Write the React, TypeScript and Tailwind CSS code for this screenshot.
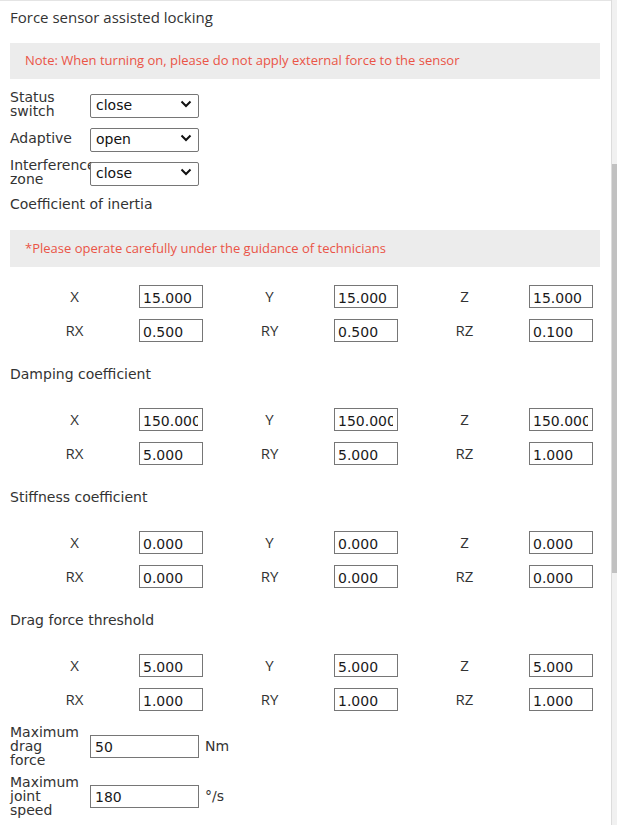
import React from "react";

const labelFont = { fontFamily: '"DejaVu Sans", Verdana, sans-serif' };

function Chevron() {
  return (
    <svg width="12" height="8" viewBox="0 0 12 8" className="absolute right-[7px] top-1/2 -translate-y-1/2 pointer-events-none">
      <path d="M1.5 1.5 L6 6 L10.5 1.5" fill="none" stroke="#111" strokeWidth="2" />
    </svg>
  );
}

function SelectRow({ label, value }: { label: string; value: string }) {
  return (
    <div className="flex items-center h-[34px]">
      <div className="w-[70px] mr-[10px] text-[14px] leading-[14px] text-[#333]" style={labelFont}>
        {label}
      </div>
      <div className="relative w-[109px] h-[24px]">
        <select
          defaultValue={value}
          className="appearance-none w-full h-full bg-white border border-[#767676] rounded-[2px] pl-[5px] text-[14px] text-[#111] outline-none"
          style={labelFont}
        >
          <option value="close">close</option>
          <option value="open">open</option>
        </select>
        <Chevron />
      </div>
    </div>
  );
}

function NumInput({ value }: { value: string }) {
  return (
    <input
      defaultValue={value}
      className="w-[64px] h-[23px] border border-[#767676] pl-[3px] pr-[4px] pt-[2px] text-[14px] text-[#1a1a1a] bg-white outline-none"
      style={labelFont}
    />
  );
}

function Group({ label, value }: { label: string; value: string }) {
  return (
    <div className="flex items-center w-[193px]">
      <div className="w-[129px] text-center text-[15px] text-[#333] leading-[20px] -translate-y-[1px]" style={{ fontFamily: '"Open Sans", sans-serif' }}>
        {label}
      </div>
      <NumInput value={value} />
    </div>
  );
}

function AxisGrid({ vals }: { vals: string[] }) {
  return (
    <div className="flex flex-col gap-[11px]">
      <div className="flex gap-[2px]">
        <Group label="X" value={vals[0]} />
        <Group label="Y" value={vals[1]} />
        <Group label="Z" value={vals[2]} />
      </div>
      <div className="flex gap-[2px]">
        <Group label="RX" value={vals[3]} />
        <Group label="RY" value={vals[4]} />
        <Group label="RZ" value={vals[5]} />
      </div>
    </div>
  );
}

function SectionLabel({ text, className = "" }: { text: string; className?: string }) {
  return (
    <div className={"text-[14px] leading-[20px] text-[#333] " + className} style={labelFont}>
      {text}
    </div>
  );
}

function Warn({ text, className = "" }: { text: string; className?: string }) {
  return (
    <div
      className={"flex items-center pl-[15px] bg-[#ececec] text-[13px] text-[#ea5447] " + className}
      style={{ fontFamily: '"Open Sans", sans-serif' }}
    >
      {text}
    </div>
  );
}

function UnitRow({ label, value, unit }: { label: string; value: string; unit: string }) {
  return (
    <div className="flex items-center">
      <div className="w-[70px] mr-[10px] text-[14px] leading-[14px] text-[#333]" style={labelFont}>
        {label}
      </div>
      <input
        defaultValue={value}
        className="w-[109px] h-[23px] border border-[#767676] pl-[4px] pt-[1px] text-[14px] text-[#1a1a1a] bg-white outline-none"
        style={labelFont}
      />
      <span className="ml-[6px] text-[14px] text-[#333]" style={labelFont}>
        {unit}
      </span>
    </div>
  );
}

export default function App() {
  return (
    <div className="w-[617px] h-[825px] flex overflow-hidden bg-white">
      <div className="w-[611px] border-t border-[#e4e4e4] pl-[10px] pr-[11px] pt-[6px]">
        <div className="text-[15px] leading-[20px] text-[#333]" style={{ fontFamily: '"Open Sans", sans-serif' }}>
          Force sensor assisted locking
        </div>
        <Warn className="mt-[16px] h-[36px]" text="Note: When turning on, please do not apply external force to the sensor" />
        <div className="mt-[8px]">
          <SelectRow label="Status switch" value="close" />
          <SelectRow label="Adaptive" value="open" />
          <SelectRow label="Interference zone" value="close" />
        </div>
        <SectionLabel className="mt-[5px]" text="Coefficient of inertia" />
        <Warn className="mt-[16px] h-[37px]" text="*Please operate carefully under the guidance of technicians" />
        <div className="mt-[18px]">
          <AxisGrid vals={["15.000", "15.000", "15.000", "0.500", "0.500", "0.100"]} />
        </div>
        <SectionLabel className="mt-[22px]" text="Damping coefficient" />
        <div className="mt-[24px]">
          <AxisGrid vals={["150.000", "150.000", "150.000", "5.000", "5.000", "1.000"]} />
        </div>
        <SectionLabel className="mt-[22px]" text="Stiffness coefficient" />
        <div className="mt-[24px]">
          <AxisGrid vals={["0.000", "0.000", "0.000", "0.000", "0.000", "0.000"]} />
        </div>
        <SectionLabel className="mt-[22px]" text="Drag force threshold" />
        <div className="mt-[24px]">
          <AxisGrid vals={["5.000", "5.000", "5.000", "1.000", "1.000", "1.000"]} />
        </div>
        <div className="mt-[14px] flex flex-col gap-[8px]">
          <UnitRow label="Maximum drag force" value="50" unit="Nm" />
          <UnitRow label="Maximum joint speed" value="180" unit="°/s" />
        </div>
      </div>
      <div className="w-[6px] h-full bg-[#f1f1f1] border-l border-[#dcdcdc] flex flex-col">
        <div className="mt-[164px] h-[409px] bg-[#c1c1c1]" />
      </div>
    </div>
  );
}
